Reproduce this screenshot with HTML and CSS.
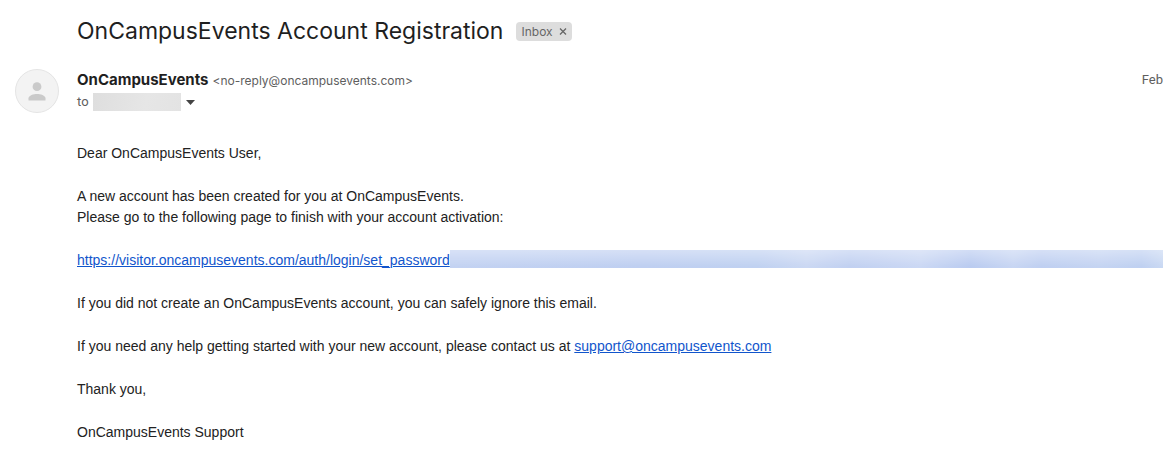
FILE: index.html
```html
<!DOCTYPE html>
<html lang="en">
<head>
<meta charset="utf-8">
<title>OnCampusEvents Account Registration</title>
<link rel="stylesheet" href="styles.css">
</head>
<body>
<main class="mail">
  <header class="subject">
    <h1 class="subject-title">OnCampusEvents Account Registration</h1>
    <span class="label">Inbox
      <button class="label-remove" type="button" aria-label="Remove Inbox label">
        <svg width="8" height="8" viewBox="0 0 8 8" aria-hidden="true"><path d="M1 1.5l6 6M7 1.5l-6 6" stroke="#666" stroke-width="1.3" fill="none"/></svg>
      </button>
    </span>
  </header>
  <section class="sender">
    <svg class="avatar" viewBox="0 0 44 44" aria-hidden="true">
      <circle cx="22" cy="22" r="21.5" fill="#f3f3f3" stroke="#e4e4e4"/>
      <circle cx="22" cy="17.7" r="4.4" fill="#cacaca"/>
      <path d="M13.5 31.5v-2.2c0-3 5.2-4.4 8.5-4.4s8.5 1.4 8.5 4.4v2.2z" fill="#cacaca"/>
    </svg>
    <div class="sender-info">
      <div class="sender-line"><strong class="sender-name">OnCampusEvents</strong><span class="sender-email">&lt;no-reply@oncampusevents.com&gt;</span></div>
      <div class="recipient"><span>to</span><span class="recipient-mask"></span>
        <button class="details" type="button" aria-label="Show details">
          <svg width="9" height="5" viewBox="0 0 9 5" aria-hidden="true"><path d="M0 0h9L4.5 5z" fill="#444"/></svg>
        </button>
      </div>
    </div>
    <time class="date">Feb</time>
  </section>
  <article class="message">
    <p>Dear OnCampusEvents User,</p>
    <p>A new account has been created for you at OnCampusEvents.<br>Please go to the following page to finish with your account activation:</p>
    <p class="activation"><a href="#">https://visitor.oncampusevents.com/auth/login/set_password</a><span class="link-mask"></span></p>
    <p>If you did not create an OnCampusEvents account, you can safely ignore this email.</p>
    <p>If you need any help getting started with your new account, please contact us at <a href="mailto:support@oncampusevents.com">support@oncampusevents.com</a></p>
    <p>Thank you,</p>
    <p>OnCampusEvents Support</p>
  </article>
</main>
</body>
</html>
```
FILE: styles.css
```css
* { box-sizing: border-box; }
body {
  margin: 0;
  background: #fff;
  color: #222;
  font-family: "Liberation Sans", Arial, sans-serif;
  font-size: 14px;
  overflow-x: hidden;
}
button {
  display: flex;
  padding: 0;
  border: 0;
  background: none;
}
.mail { padding-top: 16px; }
.subject {
  display: flex;
  align-items: center;
  gap: 13px;
  padding-left: 77px;
}
.subject-title {
  margin: 0;
  font: 400 23px/30px Inter, sans-serif;
  color: #1f1f1f;
}
.label {
  display: flex;
  align-items: center;
  gap: 6px;
  padding: 0 5px;
  border-radius: 4px;
  background: #ddd;
  color: #666;
  font: 12px/19px Inter, sans-serif;
}
.sender {
  display: flex;
  gap: 18px;
  margin-top: 23px;
  padding-left: 15px;
  color: #5e5e5e;
  font: 13px/22px Roboto, sans-serif;
}
.avatar { width: 44px; height: 44px; flex: none; }
.sender-info { flex: 1; }
.sender-line { display: flex; align-items: baseline; gap: 4px; height: 22px; }
.sender-name { color: #1f1f1f; font: 700 15px/22px Inter, sans-serif; }
.sender-email { font: 12px/22px Inter, sans-serif; }
.recipient { display: flex; align-items: center; gap: 4px; }
.recipient-mask {
  width: 88px;
  height: 18px;
  background: linear-gradient(100deg, #dedede, #e6e6e6 60%, #e3e3e3);
}
.details { margin-left: 1px; }
.message {
  display: flex;
  flex-direction: column;
  gap: 22px;
  margin-top: 30px;
  padding: 0 0 10px 77px;
  line-height: 21px;
}
.message p { margin: 0; }
.message a { color: #1155cc; }
.message .activation { display: flex; align-items: flex-start; }
.link-mask {
  flex: 1;
  height: 18px;
  background:
    linear-gradient(rgba(255, 255, 255, 0.35), rgba(255, 255, 255, 0) 90%),
    linear-gradient(90deg, #c3d2f2, #bfcff1 27%, #c0d1f1 43%, #cbd8f3 50%, #c1d0f1 56%, #cbd8f4 66%, #bacbf0 73%, #c8d6f3 79%, #bfcff1 83%, #c5d4f2 91%, #bfd0f1 97%, #cad9f3);
}
```
